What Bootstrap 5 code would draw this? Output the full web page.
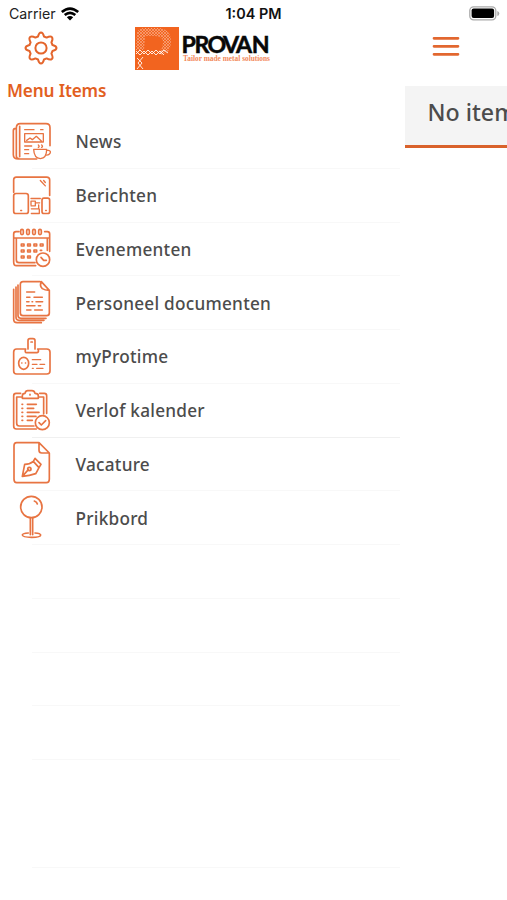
<!DOCTYPE html>
<html lang="nl">
<head>
<meta charset="utf-8">
<meta name="viewport" content="width=device-width, initial-scale=1">
<title>Provan</title>
<link href="https://cdn.jsdelivr.net/npm/bootstrap@5.3.0/dist/css/bootstrap.min.css" rel="stylesheet">
<style>
  body { font-family: "Noto Sans", "Open Sans", sans-serif; color: #4c4c4c; background: #fff; height: 900px; overflow: hidden; }
  .accent { color: #e2601f; }
  .statusbar { height: 26px; font: 15px/26px Inter, "Liberation Sans", sans-serif; color: #222; padding: 1px 7px 0 9px; }
  .statusbar > div { flex: 1 1 0; }
  .carrier { font-size: 14.2px; }
  .clock { font-weight: 600; font-size: 14.4px; color: #111; margin-left: -2px; }
  .topbar { height: 54px; padding: 1px 47px 0 24px; }
  .brand { margin-left: 77px; }
  .burger { margin-top: 9px; }
  .drawer { width: 405px; flex: none; }
  .drawer-title { font-size: 17.2px; font-weight: 600; line-height: 22px; height: 35px; padding-left: 7px; letter-spacing: -.15px; }
  .entry { height: 53.75px; font-size: 17.2px; font-weight: 500; letter-spacing: .25px; }
  .entry svg { width: 60px; height: 53.8px; flex: none; fill: none; stroke: #e87442; stroke-width: 5; stroke-linecap: round; stroke-linejoin: round; }
  .entry-label { padding: 1px 0 0 15.500px; white-space: nowrap; }
  .rule { height: 1px; margin-left: 32px; margin-right: 5px; background: #f8f8f8; margin-top: -1px; }
  .rule-strong { background: #f0f0f0; }
  .content { margin-top: 6px; flex: 1 1 0; overflow: hidden; }
  .content-title { height: 61.5px; background: #f4f4f4; border-bottom: 3px solid #d9622b; padding: 8px 0 0 22.500px; font-size: 23.2px; line-height: 36px; font-weight: 500; white-space: nowrap; }
</style>
</head>
<body>
<header>
  <div class="statusbar d-flex align-items-center">
    <div class="d-flex align-items-center gap-1"><span class="carrier">Carrier</span>
      <svg width="20" height="14" viewBox="0 0 19 14" fill="none" stroke="#000" stroke-width="2.6"><path d="M1.3 5Q9.500-1.900 17.700 5M4.200 8.100Q9.500 3.600 14.800 8.100"/><path d="M9.500 13.500L6.300 10.300Q9.500 7.700 12.700 10.300Z" fill="#000" stroke="none"/></svg>
    </div>
    <span class="clock">1:04 PM</span>
    <div class="d-flex justify-content-end">
      <svg width="31" height="15" viewBox="0 0 31 15"><rect x=".8" y=".8" width="26" height="13" rx="3.800" fill="#fff" stroke="#aaa" stroke-width="1.300"/><rect x="2.600" y="2.600" width="22.500" height="9.400" rx="2" fill="#000"/><path d="M28.300 5v5q2-.5 2-2.500t-2-2.500" fill="#aaa"/></svg>
    </div>
  </div>
  <nav class="topbar d-flex">
    <svg class="mt-1" width="34" height="34" viewBox="0 0 34 34" fill="none" stroke="#e4652c" stroke-width="2" stroke-linejoin="round"><path d="M14 5.500Q15 1.500 17 1.500t3 4l2.600 1.100Q26.500 4.500 27.900 6.100t-.5 5.300L28.500 14q4 1 4 3t-4 3l-1.100 2.600q2.100 3.900.5 5.300t-5.300-.5L20 28.500q-1 4-3 4t-3-4l-2.600-1.100q-3.900 2.100-5.300.5t.5-5.300L5.500 20q-4-1-4-3t4-3l1.100-2.600Q4.500 7.500 6.100 6.100t5.300.5z"/><circle cx="17" cy="17" r="5.600"/></svg>
    <svg class="brand" width="138" height="44" viewBox="0 0 138 44">
      <defs><pattern id="mesh" width="3" height="3" patternUnits="userSpaceOnUse"><path d="M0 0l3 3M3 0L0 3" stroke="#fff" stroke-width=".5" opacity=".6"/></pattern></defs>
      <rect width="44" height="43" fill="#f2641f"/>
      <path d="M2 5Q4 1 10 1H22Q36 1 36 15Q36 26 26 28L24 24Q28 22 28 15Q28 9 20 9H10L9 23H1Z" fill="url(#mesh)"/>
      <g fill="none" stroke="#fff" stroke-width="1" opacity=".85"><path d="M1 27l4-4 4 4 4-4 4 4 4-4 4 4 4-4 4 3M1 24l4 4 4-4 4 4 4-4 4 4 4-4 4 4M2 31l5 5-5 6M8 30l-5 6 5 6"/></g>
      <text y="25.500" font-family="Lato, sans-serif" font-size="23.200" font-weight="700" fill="#080808" stroke="#080808" stroke-width=".5" x="46.500 59.500 72.500 88 101 116.800">PROVAN</text>
      <text x="48" y="34" font-family="Liberation Serif, serif" font-size="7.400" font-weight="700" fill="#f28a5b" textLength="87" lengthAdjust="spacingAndGlyphs">Tailor made metal solutions</text>
    </svg>
    <svg class="burger ms-auto" width="28" height="22" viewBox="0 0 28 22" stroke="#e2672f" stroke-width="2.700" stroke-linecap="round"><path d="M2 2.300h24M2 10.300h24M2 18.300h24"/></svg>
  </nav>
</header>
<main class="d-flex">
  <section class="drawer">
    <h1 class="drawer-title accent mb-0">Menu Items</h1>
    <div class="entry d-flex align-items-center"><svg viewBox="0 0 180 161.400"><path d="M110 132H55Q40 132 40 119V47q0-7 7-7M49 123V39q0-13 12-13h77q12 0 12 12v54M49 123q0 8 7 8M59 125V34"/><path stroke-width="4" d="M74 44h28M122 44h7M74 56h56v25H74zM80 76l10-7 7 5 12-10 15 14M74 93h21M74 104h12M74 116h12M115 90q5 4 0 7M125 90q5 4 0 7M101 103h39Q140 130 121 131Q102 130 101 103zM140 106h5q9 2 5 9-4 7-13 5"/></svg><span class="entry-label">News</span></div><div class="rule"></div>
    <div class="entry d-flex align-items-center"><svg viewBox="0 0 180 161.400"><g transform="translate(0 3.600)"><path d="M41 66V29q0-8 8-8h91q9 0 9 8v47"/><rect x="41" y="70" width="44" height="60" rx="7"/><rect x="126" y="84" width="23" height="46" rx="6"/><path stroke-width="4" d="M121 31l15 16M131 31l5 6M93 85h28M93 104V93h13v14h-13M106 98h13M94 116h22v-12M94 130h24v-13M62 121h3M137 121h2"/></g></svg><span class="entry-label">Berichten</span></div><div class="rule"></div>
    <div class="entry d-flex align-items-center"><svg viewBox="0 0 180 161.400"><g transform="translate(0 7)"><path d="M57 22H48q-7 0-7 7v84q0 11 8 11h58M134 22h8q7 0 7 7v52M41 41h108M49 42v65q0 8 8 8h48M142 42v36"/><rect x="62" y="15" width="8" height="16" rx="4"/><rect x="80" y="15" width="8" height="16" rx="4"/><rect x="98" y="15" width="8" height="16" rx="4"/><rect x="116" y="15" width="8" height="16" rx="4"/><path stroke-width="5" d="M64 59h8v6h-8zM83 59h8v6h-8zM102 59h8v6h-8zM121 59h8v6h-8zM64 77h8v6h-8zM83 77h8v6h-8zM102 77h8v6h-8zM64 95h8v6h-8zM83 95h8v6h-8zM121 78h4"/><circle cx="129" cy="106" r="20" fill="#fff"/><path d="M123 99l8 9h8"/></g></svg><span class="entry-label">Evenementen</span></div><div class="rule"></div>
    <div class="entry d-flex align-items-center"><svg viewBox="0 0 180 161.400"><g transform="translate(0 5)"><path d="M120 12H69q-8 0-8 8v86q0 8 8 8h71q8 0 8-8V38L124 12q-6 13 3 21 7 5 21 5M54 22v91q0 9 9 9h75M48 28v91q0 9 9 9h75M41 35v90q0 10 10 10h73"/><path stroke-width="4.500" d="M80 43h24M80 59h10M102 59h25M80 72h7M96 72h2M108 72h20M80 84h25M115 84h7M80 97h13M104 97h23"/></g></svg><span class="entry-label">Personeel documenten</span></div><div class="rule"></div>
    <div class="entry d-flex align-items-center"><svg viewBox="0 0 180 161.400"><path d="M77 57H50q-9 0-9 9v57q0 9 9 9h90q10 0 10-9V66q0-9-10-9h-27M84 57V32q0-6 6-6h9q6 0 6 6v25M77 57q-4 11 3 11h31q7-1 3-11M93 36h4"/><ellipse cx="71" cy="100" rx="15" ry="18"/><path stroke-width="4" d="M65 99h1M76 99h1M97 89h25M97 103h14M120 103h14M97 115h3M110 115h19"/></svg><span class="entry-label">myProtime</span></div><div class="rule"></div>
    <div class="entry d-flex align-items-center"><svg viewBox="0 0 180 161.400"><g transform="translate(0 3)"><path d="M62 25H48q-7 0-7 7v91q0 9 8 9h60M119 25h14q7 0 7 7v53M63 36H50v79q0 8 8 8h44M119 36h12v51M67 40v-8q0-7 8-7 2-8 8-8h13q7 0 9 8 10 0 10 7v8zM90 28v2"/><path stroke-width="5" d="M66 58h2M82 58h27M66 70h2M82 70h19M66 82h2M82 82h35M66 94h2M82 94h26M66 106h2M82 106h15"/><circle cx="127" cy="113" r="21" fill="#fff"/><path d="M117 113l7 7 13-13"/></g></svg><span class="entry-label">Verlof kalender</span></div><div class="rule rule-strong"></div>
    <div class="entry d-flex align-items-center"><svg viewBox="0 0 180 161.400"><path d="M115 17H50q-8 0-8 9v101q0 10 8 10h89q9 0 9-10V48L117 17v23q0 8 8 8h23M67 118l7-36q15 0 26-9l17 19q-6 12-10 18-18 6-40 8l18-20M100 73l5-9 18 18-6 10"/><circle cx="88" cy="96" r="5"/></svg><span class="entry-label">Vacature</span></div><div class="rule"></div>
    <div class="entry d-flex align-items-center"><svg viewBox="0 0 180 161.400"><g transform="translate(0 -5)"><circle cx="94" cy="53" r="32"/><path d="M91 87v49M98 87v49M103 35q8 3 9 9M85 131q-18 1-18 6 1 7 28 7 27 0 27-7-1-5-17-6"/></g></svg><span class="entry-label">Prikbord</span></div><div class="rule"></div>
    <div class="entry"></div><div class="rule"></div>
    <div class="entry"></div><div class="rule"></div>
    <div class="entry"></div><div class="rule"></div>
    <div class="entry"></div><div class="rule"></div>
    <div class="entry"></div>
    <div class="entry"></div><div class="rule"></div>
  </section>
  <section class="content"><div class="content-title">No items</div></section>
</main>
<script src="https://cdn.jsdelivr.net/npm/bootstrap@5.3.0/dist/js/bootstrap.bundle.min.js"></script>
</body>
</html>
